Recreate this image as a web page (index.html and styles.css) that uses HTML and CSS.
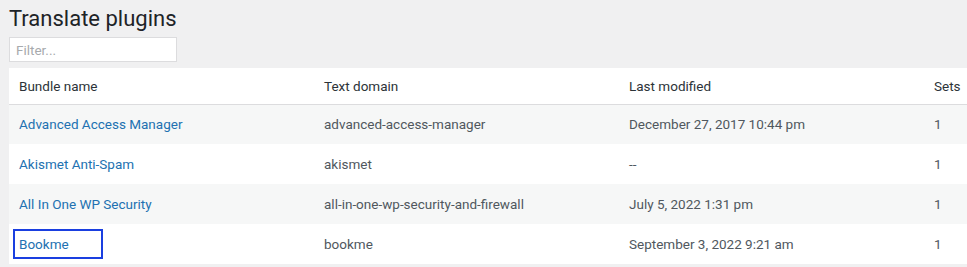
FILE: index.html
```html
<!DOCTYPE html>
<html lang="en">
  <head>
    <meta charset="UTF-8" />
    <title>Translate plugins</title>
    <link rel="stylesheet" href="styles.css">
  </head>
  <body>
    <div class="wrap">
      <h1>Translate plugins</h1>
      <input class="filter" type="text" placeholder="Filter..." />
      <table class="bundles">
        <colgroup>
          <col class="col-name" />
          <col class="col-domain" />
          <col class="col-date" />
          <col class="col-sets" />
        </colgroup>
        <thead>
          <tr>
            <th>Bundle name</th>
            <th>Text domain</th>
            <th>Last modified</th>
            <th>Sets</th>
          </tr>
        </thead>
        <tbody>
          <tr>
            <td><a href="#">Advanced Access Manager</a></td>
            <td>advanced-access-manager</td>
            <td>December 27, 2017 10:44 pm</td>
            <td>1</td>
          </tr>
          <tr>
            <td><a href="#">Akismet Anti-Spam</a></td>
            <td>akismet</td>
            <td>--</td>
            <td>1</td>
          </tr>
          <tr>
            <td><a href="#">All In One WP Security</a></td>
            <td>all-in-one-wp-security-and-firewall</td>
            <td>July 5, 2022 1:31 pm</td>
            <td>1</td>
          </tr>
          <tr>
            <td><a href="#" class="focused">Bookme</a></td>
            <td>bookme</td>
            <td>September 3, 2022 9:21 am</td>
            <td>1</td>
          </tr>
        </tbody>
      </table>
    </div>
  </body>
</html>
```

FILE: styles.css
```css
* {
  margin: 0;
  padding: 0;
  box-sizing: border-box;
}

body {
  background: #f0f0f1;
  font-family: Roboto, "Noto Sans", sans-serif;
  font-size: 13.5px;
  color: #50575e;
  overflow: hidden;
}

.wrap {
  padding: 4px 0 0 9px;
}

h1 {
  font-size: 22px;
  font-weight: 400;
  color: #1d2327;
  line-height: 29px;
  margin-bottom: 4px;
}

.filter {
  display: block;
  width: 168px;
  height: 25px;
  border: 1px solid #dcdcde;
  background: #fff;
  padding: 0 6px;
  font-family: inherit;
  font-size: 13.5px;
  color: #2c3338;
  margin-bottom: 6px;
}

.filter::placeholder {
  color: #a7aaad;
}

.bundles {
  width: 1220px;
  border-collapse: collapse;
  table-layout: fixed;
  background: #fff;
}

.col-name,
.col-domain,
.col-date {
  width: 305px;
}

.bundles th {
  text-align: left;
  font-weight: 400;
  color: #2c3338;
  height: 36px;
  padding: 1px 10px 0;
  border-bottom: 1px solid #dcdcde;
}

.bundles td {
  height: 40px;
  padding: 0 10px;
  vertical-align: middle;
}

.bundles tbody tr:nth-child(odd) {
  background: #f6f7f7;
}

.bundles a {
  color: #2271b1;
  text-decoration: none;
}

.bundles a.focused {
  display: inline-block;
  margin-left: -6px;
  padding: 5px 4px;
  width: 90px;
  border: 2px solid #1a3fe0;
}
```
